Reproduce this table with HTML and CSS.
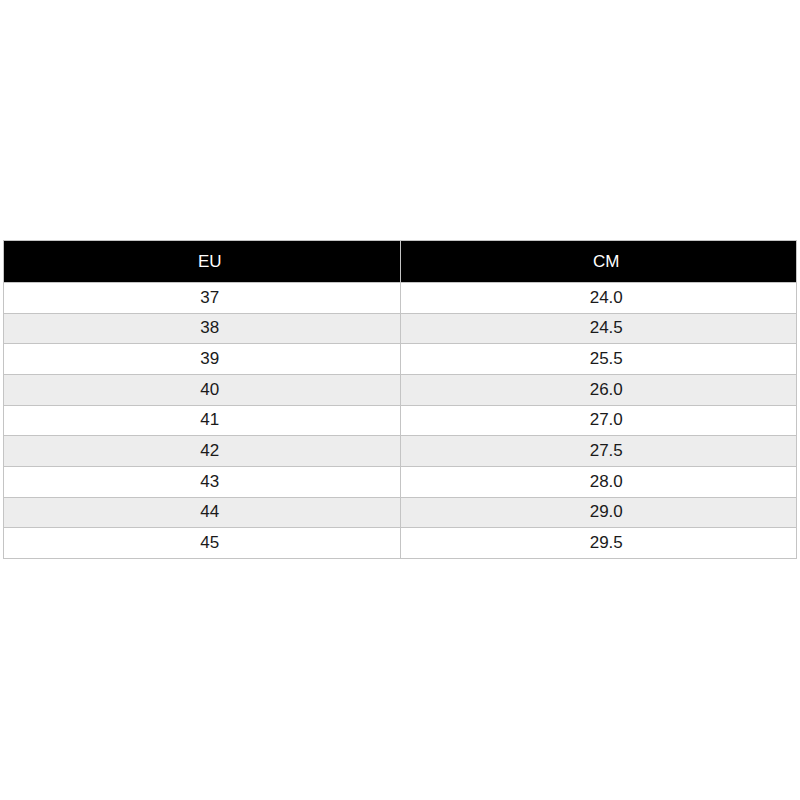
FILE: index.html
```html
<!DOCTYPE html>
<html>
<head>
<meta charset="utf-8">
<link rel="stylesheet" href="styles.css">
</head>
<body>
<div class="page">
<table class="size-table">
<thead>
<tr class="head-row"><th>EU</th><th>CM</th></tr>
</thead>
<tbody>
<tr><td>37</td><td>24.0</td></tr>
<tr><td>38</td><td>24.5</td></tr>
<tr><td>39</td><td>25.5</td></tr>
<tr><td>40</td><td>26.0</td></tr>
<tr><td>41</td><td>27.0</td></tr>
<tr><td>42</td><td>27.5</td></tr>
<tr><td>43</td><td>28.0</td></tr>
<tr><td>44</td><td>29.0</td></tr>
<tr><td>45</td><td>29.5</td></tr>
</tbody>
</table>
</div>
</body>
</html>
```
FILE: styles.css
```css
html, body {
  margin: 0;
  padding: 0;
  background: #fff;
}
.page {
  padding: 240px 3px 0 3px;
}
.size-table {
  width: 794px;
  border-collapse: collapse;
  font-family: "Liberation Sans", Arial, sans-serif;
  font-size: 17px;
  color: #1a1a1a;
  table-layout: fixed;
}
.size-table th,
.size-table td {
  border: 1px solid #c4c4c4;
  text-align: center;
  padding: 0 0 0 16px;
}
.size-table th {
  background: #000;
  color: #fff;
  font-weight: normal;
  height: 41px;
}
.size-table td {
  height: 29.67px;
}
.size-table tbody tr:nth-child(even) td {
  background: #ededed;
}
```
